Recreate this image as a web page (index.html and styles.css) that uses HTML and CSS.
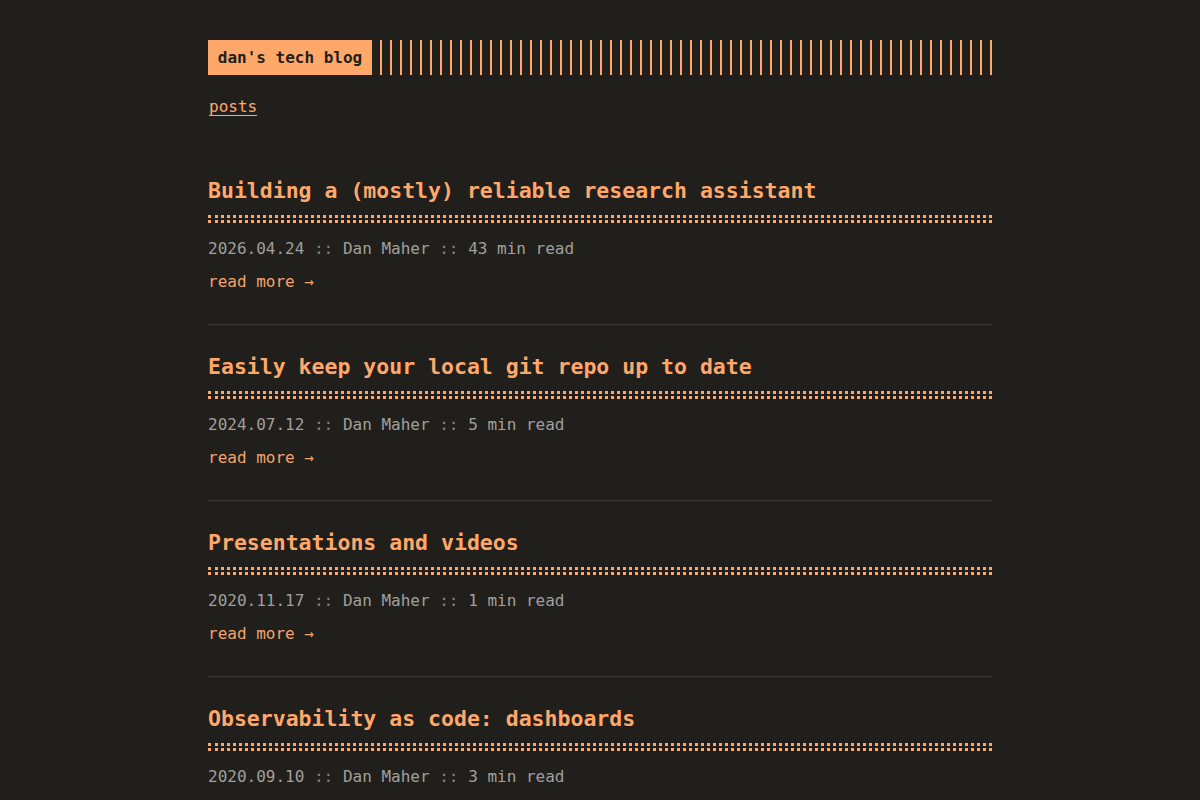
FILE: index.html
```html
<!DOCTYPE html>
<html lang="en">

<head>
    <meta charset="UTF-8">
    <meta name="viewport" content="width=device-width, initial-scale=1.0">
    <title>dan's tech blog</title>
    <link rel="stylesheet" href="styles.css">
</head>

<body>
    <div class="container">
        <header class="header">
            <div class="header__logo">
                <a class="logo" href="#">dan's tech blog</a>
            </div>
            <nav class="menu">
                <a href="#">posts</a>
            </nav>
        </header>

        <main class="posts">
            <article class="post">
                <h1 class="post-title"><a href="#">Building a (mostly) reliable research assistant</a></h1>
                <div class="post-meta">
                    <span>2026.04.24</span> <span class="sep">::</span> <span>Dan Maher</span> <span class="sep">::</span> <span>43 min read</span>
                </div>
                <a class="read-more" href="#">read more →</a>
            </article>

            <article class="post">
                <h1 class="post-title"><a href="#">Easily keep your local git repo up to date</a></h1>
                <div class="post-meta">
                    <span>2024.07.12</span> <span class="sep">::</span> <span>Dan Maher</span> <span class="sep">::</span> <span>5 min read</span>
                </div>
                <a class="read-more" href="#">read more →</a>
            </article>

            <article class="post">
                <h1 class="post-title"><a href="#">Presentations and videos</a></h1>
                <div class="post-meta">
                    <span>2020.11.17</span> <span class="sep">::</span> <span>Dan Maher</span> <span class="sep">::</span> <span>1 min read</span>
                </div>
                <a class="read-more" href="#">read more →</a>
            </article>

            <article class="post">
                <h1 class="post-title"><a href="#">Observability as code: dashboards</a></h1>
                <div class="post-meta">
                    <span>2020.09.10</span> <span class="sep">::</span> <span>Dan Maher</span> <span class="sep">::</span> <span>3 min read</span>
                </div>
                <a class="read-more" href="#">read more →</a>
            </article>
        </main>
    </div>
</body>

</html>
```

FILE: styles.css
```css
* {
    margin: 0;
    padding: 0;
    box-sizing: border-box;
}

body {
    background: #211f1c;
    color: #a19f9b;
    font-family: "DejaVu Sans Mono", "Liberation Mono", monospace;
    font-size: 16px;
    line-height: 24px;
}

a {
    color: #ffa86a;
}

/* header */
.container {
    width: 784px;
    margin: 0 auto;
    padding-top: 40px;
}

.header__logo {
    display: flex;
    height: 35px;
}

.header__logo::after {
    content: "";
    flex: 1;
    margin-left: 8px;
    background: repeating-linear-gradient(90deg, #ffa86a, #ffa86a 2px, transparent 0, transparent 10px);
}

.logo {
    display: flex;
    align-items: center;
    justify-content: center;
    width: 164px;
    background: #ffa86a;
    color: #221f1c;
    font-weight: bold;
    text-decoration: none;
}

.menu {
    margin-top: 20px;
    padding-left: 1px;
}

.menu a {
    text-decoration: underline;
    text-underline-offset: 3px;
}

/* posts */
.posts {
    margin-top: 58px;
}

.post {
    padding-bottom: 30px;
    margin-bottom: 28px;
    border-bottom: 1px solid #393733;
}

.post-title {
    position: relative;
    font-size: 21.5px;
    line-height: 28px;
    padding-bottom: 15px;
    margin-bottom: 14px;
    border-bottom: 3px dotted #ffa86a;
}

.post-title::after {
    content: "";
    position: absolute;
    left: 0;
    bottom: 2px;
    width: 100%;
    border-bottom: 3px dotted #ffa86a;
}

.post-title a {
    text-decoration: none;
}

.post-meta {
    color: #a19f9b;
}

.post-meta .sep {
    color: #85837f;
}

.read-more {
    display: inline-block;
    margin-top: 9px;
    text-decoration: none;
    color: #f2a46c;
}
```
